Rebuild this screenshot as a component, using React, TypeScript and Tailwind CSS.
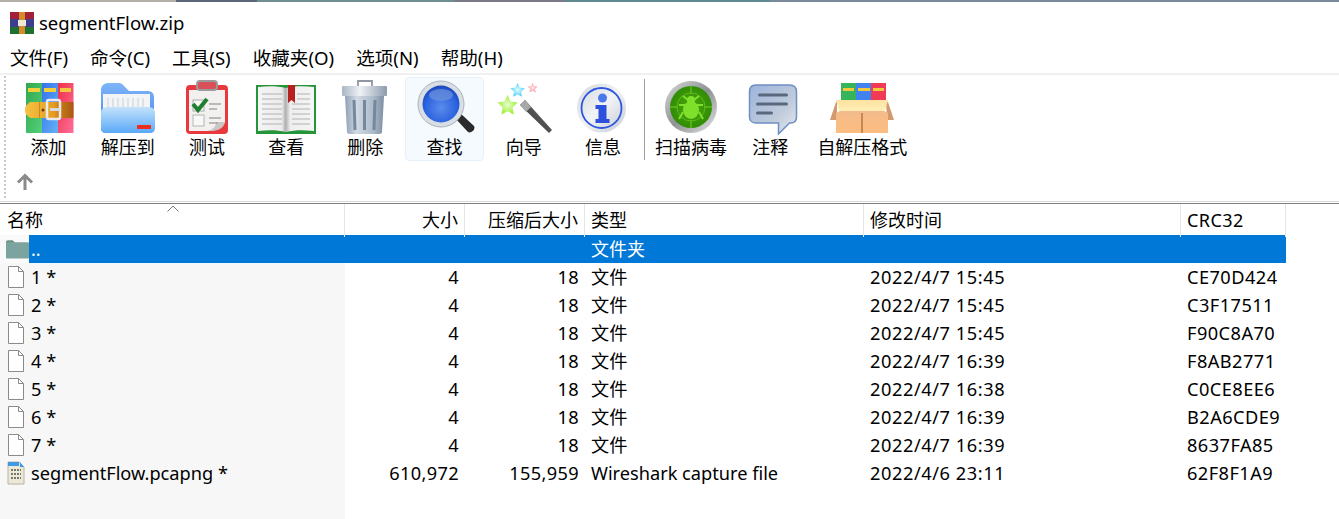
import type { ReactNode } from 'react';

const cjk = "font-['Noto_Sans','Noto_Sans_CJK_SC',sans-serif]";

function RarIcon() {
  return (
    <svg width="64" height="56" viewBox="0 0 64 56">
      <defs>
        <linearGradient id="rg" x1="0" x2="1" y1="0" y2="1"><stop offset="0" stopColor="#2fa84f" /><stop offset="1" stopColor="#55cf7a" /></linearGradient>
        <linearGradient id="rb" x1="0" x2="1" y1="0" y2="1"><stop offset="0" stopColor="#3572ea" /><stop offset="1" stopColor="#63b2f7" /></linearGradient>
        <linearGradient id="rr" x1="0" x2="1" y1="0" y2="1"><stop offset="0" stopColor="#ee3048" /><stop offset="1" stopColor="#fd6f98" /></linearGradient>
        <linearGradient id="rs" x1="0" x2="1"><stop offset="0" stopColor="#f6c243" /><stop offset="0.6" stopColor="#e49c22" /><stop offset="0.72" stopColor="#c97a18" /><stop offset="1" stopColor="#a85a12" /></linearGradient>
      </defs>
      <rect x="9" y="3" width="16" height="50" fill="url(#rg)" />
      <rect x="25" y="3" width="16" height="50" fill="url(#rb)" />
      <rect x="41" y="3" width="15.500" height="50" fill="url(#rr)" />
      <rect x="11" y="8" width="12" height="4" fill="#f2cf3c" />
      <rect x="27" y="8" width="12" height="4" fill="#f2cf3c" />
      <rect x="43" y="8" width="11" height="4" fill="#f2c83c" />
      <path d="M13 22h43.500v16H13c-3-3-5-3.500-5-8s2-5 5-8z" fill="url(#rs)" />
      <path d="M22 22h1v16h-1z" fill="#c98a22" />
      <circle cx="26" cy="30" r="1.500" fill="#6b3c0c" />
      <rect x="30" y="20" width="13" height="19" rx="2" fill="none" stroke="#e9e9ee" strokeWidth="2.500" />
      <rect x="33" y="28" width="10" height="3" fill="#d8dae0" />
    </svg>
  );
}

function FolderIcon() {
  return (
    <svg width="64" height="56" viewBox="0 0 64 56">
      <defs>
        <linearGradient id="fb" x1="0" x2="0" y1="0" y2="1"><stop offset="0" stopColor="#c3e2fb" /><stop offset="1" stopColor="#5ba9f8" /></linearGradient>
        <linearGradient id="ft" x1="0" x2="0" y1="0" y2="1"><stop offset="0" stopColor="#7fb6f8" /><stop offset="1" stopColor="#3f7cf0" /></linearGradient>
      </defs>
      <path d="M5 10c0-4 3-7 7-7h11c3 0 4 2 6 4l4 4h19c4 0 6 3 6 6v31c0 3-2 5-5 5H10c-3 0-5-2-5-5z" fill="url(#ft)" />
      <rect x="7" y="14" width="47" height="20" fill="#f2f4f6" />
      <path d="M12 18v9M17 18v9M22 18v9M27 18v9M32 18v9M37 18v9M42 18v9M47 18v9" stroke="#c8d0d8" strokeWidth="1" />
      <path d="M5 33c0-4 2-5 6-6h41c4 0 7 2 7 6v15c0 3-2 5-5 5H10c-3 0-5-2-5-5z" fill="url(#fb)" />
      <rect x="41" y="45" width="14" height="4" fill="#ee2f1c" />
    </svg>
  );
}

function TestIcon() {
  return (
    <svg width="64" height="56" viewBox="0 0 64 56">
      <rect x="11" y="5" width="42" height="49" rx="4" fill="#e8393f" />
      <path d="M14 10h36v32c-3 7-10 9-18 9H14z" fill="#f3f1ef" />
      <path d="M50 42c-2 8-8 9-18 9 8-2 9-6 9-9z" fill="#c9c6c3" />
      <rect x="22" y="1" width="20" height="9" rx="3" fill="#d85058" stroke="#9b9b9b" strokeWidth="2" />
      <rect x="18" y="20" width="11" height="11" fill="#f8f8f8" stroke="#a9a9a9" />
      <rect x="18" y="35" width="11" height="11" fill="#f8f8f8" stroke="#b5b5b5" />
      <path d="M18 24l5 6 9-11" fill="none" stroke="#1f7f2f" strokeWidth="4" />
      <path d="M34 24h12M34 29h8M34 38h12M34 43h9" stroke="#aaa6a3" strokeWidth="1.500" />
    </svg>
  );
}

function BookIcon() {
  return (
    <svg width="64" height="56" viewBox="0 0 64 56">
      <defs>
        <linearGradient id="bl" x1="0" x2="1"><stop offset="0" stopColor="#f5f5f5" /><stop offset="0.85" stopColor="#ececec" /><stop offset="1" stopColor="#a9a9a9" /></linearGradient>
        <linearGradient id="br" x1="0" x2="1"><stop offset="0" stopColor="#b5b5b5" /><stop offset="0.15" stopColor="#eeeeee" /><stop offset="1" stopColor="#f5f5f5" /></linearGradient>
      </defs>
      <path d="M2 5h60v49H2z" fill="#25953a" />
      <path d="M4 7c10-1 20-1 28 1v44c-8-2-18-2-28-1z" fill="url(#bl)" />
      <path d="M60 7c-10-1-20-1-28 1v44c8-2 18-2 28-1z" fill="url(#br)" />
      <path d="M8 14h20M8 19h20M8 24h20M8 29h20M8 34h20M8 39h20M8 44h20M38 24h18M38 29h18M38 34h18M38 39h18M38 44h18M43 14h13M43 19h13" stroke="#c6c6c6" strokeWidth="1.300" />
      <path d="M34 5h7v18l-3.500-3-3.500 3z" fill="#b8201f" />
    </svg>
  );
}

function TrashIcon() {
  return (
    <svg width="64" height="56" viewBox="0 0 64 56">
      <defs>
        <linearGradient id="tb" x1="0" x2="1"><stop offset="0" stopColor="#8ea1b6" /><stop offset="0.3" stopColor="#d0dae4" /><stop offset="0.7" stopColor="#aebccb" /><stop offset="1" stopColor="#7e90a5" /></linearGradient>
        <linearGradient id="tl" x1="0" x2="1"><stop offset="0" stopColor="#a9b6c4" /><stop offset="0.4" stopColor="#eef2f5" /><stop offset="1" stopColor="#8d9caf" /></linearGradient>
      </defs>
      <path d="M25 7V1h14v6" fill="none" stroke="#8f98a3" strokeWidth="1.800" />
      <rect x="9" y="6" width="45" height="10" rx="1" fill="url(#tl)" />
      <path d="M12 16h39l-2 36c0 1-1 2-3 2H17c-2 0-3-1-3-2z" fill="url(#tb)" />
      <path d="M21 20l1 30M31.500 20v30M42 20l-1 30" stroke="#76889c" strokeWidth="3" />
    </svg>
  );
}

function SearchIcon() {
  return (
    <svg width="64" height="56" viewBox="0 0 64 56">
      <defs>
        <radialGradient id="sb" cx="0.5" cy="0.6" r="0.6"><stop offset="0" stopColor="#5b8bea" /><stop offset="0.7" stopColor="#2c63e0" /><stop offset="1" stopColor="#1b45b8" /></radialGradient>
      </defs>
      <path d="M41 37l5-5 15 14c2 3-3 8-6 6z" fill="#2b2b2b" />
      <circle cx="28" cy="24" r="23" fill="#d9dee4" stroke="#a9b2bc" strokeWidth="1" />
      <circle cx="28" cy="24" r="18.500" fill="url(#sb)" />
      <ellipse cx="28" cy="15" rx="12" ry="6" fill="#6e93dc" opacity="0.7" />
    </svg>
  );
}

function WandIcon() {
  return (
    <svg width="64" height="56" viewBox="0 0 64 56">
      <defs>
        <radialGradient id="wg"><stop offset="0" stopColor="#e8ffd0" /><stop offset="1" stopColor="#9cee30" /></radialGradient>
        <radialGradient id="wb"><stop offset="0" stopColor="#e4fdff" /><stop offset="1" stopColor="#4ed2f8" /></radialGradient>
        <radialGradient id="wp"><stop offset="0" stopColor="#ffe9ea" /><stop offset="1" stopColor="#f99ca6" /></radialGradient>
        <linearGradient id="wm" x1="0" x2="1" y1="1" y2="0"><stop offset="0" stopColor="#2a2a2a" /><stop offset="1" stopColor="#777777" /></linearGradient>
      </defs>
      <path d="M28 25l5-5 27 30-3 3z" fill="url(#wm)" />
      <path d="M28 25l5-5 6 7-5 5z" fill="#a8a8a8" />
      <path d="M15.600 15l3 6.500 7 1-5 5 1.200 7-6.200-3.300-6.200 3.300 1.200-7-5-5 7-1z" fill="url(#wg)" />
      <path d="M25.600 3l2.200 4.500 5 .7-3.600 3.500.8 5-4.400-2.300-4.400 2.300.8-5-3.600-3.500 5-.7z" fill="url(#wb)" />
      <path d="M40.600 3l1.500 3 3.500.5-2.500 2.500.6 3.500-3.100-1.700-3.100 1.700.6-3.500-2.500-2.500 3.500-.5z" fill="url(#wp)" />
    </svg>
  );
}

function InfoIcon() {
  return (
    <svg width="64" height="56" viewBox="1.500 0 64 56">
      <defs>
        <linearGradient id="ig" x1="0" x2="1" y1="0" y2="1"><stop offset="0" stopColor="#d3d8de" /><stop offset="0.5" stopColor="#f1f3f5" /><stop offset="1" stopColor="#c3cad2" /></linearGradient>
      </defs>
      <circle cx="32" cy="28" r="24.500" fill="url(#ig)" />
      <circle cx="32" cy="28" r="20" fill="none" stroke="#3157e0" strokeWidth="1.800" />
      <circle cx="33" cy="18" r="4.500" fill="#4a78ec" />
      <path d="M26 25h11v14h3v4H26v-4h3V29h-3z" fill="#2c50dc" />
    </svg>
  );
}

function BugIcon() {
  return (
    <svg width="64" height="56" viewBox="0 0 64 56">
      <defs>
        <radialGradient id="bg1" cx="0.5" cy="0.5" r="0.55"><stop offset="0" stopColor="#4ca70e" /><stop offset="1" stopColor="#2d8a04" /></radialGradient>
        <linearGradient id="bg2" x1="0" x2="1" y1="0" y2="1"><stop offset="0" stopColor="#d8dadb" /><stop offset="0.5" stopColor="#8f9294" /><stop offset="1" stopColor="#e4e5e6" /></linearGradient>
      </defs>
      <circle cx="32" cy="27" r="26" fill="url(#bg2)" />
      <circle cx="32" cy="27" r="21" fill="url(#bg1)" />
      <circle cx="32" cy="27" r="14" fill="none" stroke="#5dbb1c" strokeWidth="1" />
      <path d="M32 6v8M32 40v8M11 27h8M45 27h8" stroke="#5dbb1c" strokeWidth="1.500" />
      <circle cx="32" cy="20" r="4" fill="#7fe02a" />
      <ellipse cx="32" cy="30" rx="8" ry="9" fill="#7fe02a" />
      <path d="M24 16l5 4M40 16l-5 4M20 25h6l1 3M44 25h-6l-1 3M20 39l4-7M44 39l-4-7" fill="none" stroke="#7fe02a" strokeWidth="2" />
    </svg>
  );
}

function NoteIcon() {
  return (
    <svg width="64" height="56" viewBox="-2.500 0 64 56">
      <defs>
        <linearGradient id="ng" x1="0" x2="1" y1="0" y2="1"><stop offset="0" stopColor="#9db4dc" /><stop offset="0.6" stopColor="#bfcbdb" /><stop offset="1" stopColor="#e4e9ef" /></linearGradient>
      </defs>
      <path d="M15 5h34c5 0 7 3 7 7v25c0 4-2 6-6 6h-1L38 54V43H15c-4 0-6-3-6-6V12c0-4 2-7 6-7z" fill="url(#ng)" stroke="#6f8fc4" strokeWidth="1.500" />
      <path d="M19 15h27M17 24h29M17 33h14" stroke="#59687c" strokeWidth="3" strokeLinecap="round" />
    </svg>
  );
}

function BoxIcon() {
  return (
    <svg width="64" height="56" viewBox="0 0 64 56">
      <defs>
        <linearGradient id="xf" x1="0" x2="0" y1="0" y2="1"><stop offset="0" stopColor="#fde2a0" /><stop offset="1" stopColor="#fff3bc" /></linearGradient>
        <linearGradient id="xb" x1="0" x2="0" y1="0" y2="1"><stop offset="0" stopColor="#f3bb8b" /><stop offset="1" stopColor="#fdbd80" /></linearGradient>
      </defs>
      <rect x="11" y="3" width="16" height="22" fill="#35b45c" />
      <rect x="26" y="3" width="16" height="22" fill="#4083f0" />
      <rect x="41" y="3" width="15" height="22" fill="#f13a56" />
      <path d="M13 8h11v3H13zM28 8h12v3H28zM43 8h11v3H43z" fill="#f2c83c" />
      <path d="M7 22h-1L0 40h7zM56 22h2l6 18h-7z" fill="#d39a70" />
      <path d="M6 20h52l-4 14H10z" fill="url(#xf)" />
      <path d="M6 33l4-2h44l4 2v20H6z" fill="url(#xb)" />
      <path d="M31 33h2v20h-2z" fill="#c98757" />
    </svg>
  );
}

function FileIcon() {
  return (
    <svg width="18" height="24" viewBox="0 0 18 24">
      <path d="M1.500 1.500h10l5 5v16h-15z" fill="#fff" stroke="#8a8a8a" strokeWidth="1" />
      <path d="M11.500 1.500v5h5" fill="none" stroke="#8a8a8a" strokeWidth="1" />
    </svg>
  );
}

function CaptureIcon() {
  return (
    <svg width="18" height="24" viewBox="0 0 18 24">
      <path d="M1 1h11l5 5v17H1z" fill="#ece9d8" stroke="#b5b5a5" strokeWidth="1" />
      <path d="M1 1h11v4H1zM13 1l4 5h-4z" fill="#3f9ae5" />
      <path d="M4 9h10M4 13h10M4 17h10" stroke="#77776a" strokeWidth="2" strokeDasharray="2 1" />
    </svg>
  );
}

function FolderSmall() {
  return (
    <svg width="24" height="20" viewBox="0 0 24 20">
      <path d="M0 3c0-1 .5-2 2-2h5l2 2h14c.5 0 1 .5 1 1v15c0 .5-.5 1-1 1H1c-.5 0-1-.5-1-1z" fill="#7ba49e" />
      <path d="M0 3c0-1 .5-2 2-2h5l2 2z" fill="#6b9480" />
    </svg>
  );
}

function ToolButton({ icon, label, wide, active }: { icon: ReactNode; label: string; wide?: string; active?: boolean }) {
  return (
    <div
      className={`flex h-[84px] flex-col items-center rounded-sm border ${wide ?? 'w-[79.2px]'} ${
        active ? 'border-[#e6f0fa] bg-[#f5faff]' : 'border-transparent'
      }`}
    >
      <div className="mt-[2px] h-[55px] shrink-0">{icon}</div>
      <span className="whitespace-nowrap text-[18px] leading-[24px]">{label}</span>
    </div>
  );
}

const columns = 'grid grid-cols-[345px_120px_120px_279px_317px_105px] w-[1286px]';

const files = [
  { name: '1 *', time: '2022/4/7 15:45', crc: 'CE70D424' },
  { name: '2 *', time: '2022/4/7 15:45', crc: 'C3F17511' },
  { name: '3 *', time: '2022/4/7 15:45', crc: 'F90C8A70' },
  { name: '4 *', time: '2022/4/7 16:39', crc: 'F8AB2771' },
  { name: '5 *', time: '2022/4/7 16:38', crc: 'C0CE8EE6' },
  { name: '6 *', time: '2022/4/7 16:39', crc: 'B2A6CDE9' },
  { name: '7 *', time: '2022/4/7 16:39', crc: '8637FA85' },
];

function Row({ icon, name, size, packed, type, time, crc }: { icon: ReactNode; name: string; size: string; packed: string; type: string; time: string; crc: string }) {
  return (
    <div className={`${columns} h-[28px] text-[18.200px] leading-[28px]`}>
      <div className="flex items-center bg-[#f7f7f7]">
        <div className="flex w-[31px] shrink-0 justify-center pl-[1px]">{icon}</div>
        <span className="whitespace-nowrap">{name}</span>
      </div>
      <div className="pr-[6px] text-right tracking-[0.34px]">{size}</div>
      <div className="pr-[6px] text-right tracking-[0.34px]">{packed}</div>
      <div className="pl-[6px] whitespace-nowrap">{type}</div>
      <div className="pl-[6px] tracking-[0.57px]">{time}</div>
      <div className="pl-[6px] tracking-[0.45px]">{crc}</div>
    </div>
  );
}

export default function App() {
  return (
    <div className={`flex h-[519px] w-[1339px] flex-col overflow-hidden bg-white text-black ${cjk}`}>
      <div className="flex h-[2px] shrink-0">
        <div className="w-[176px] bg-[#b3aea6]" />
        <div className="w-[81px] bg-[#5b6678]" />
        <div className="w-[197px] bg-[#6f8e92]" />
        <div className="w-[111px] bg-[#7c7a88]" />
        <div className="w-[205px] bg-[#5f8a90]" />
        <div className="flex-1 bg-[#7a8a98]" />
      </div>

      <div className="flex h-[41px] shrink-0 items-center pl-[10px]">
        <svg width="24" height="22" viewBox="0 0 24 22">
          <rect y="0" width="24" height="7" fill="#a3203a" />
          <rect y="7" width="24" height="8" fill="#3e3e90" />
          <rect y="15" width="24" height="7" fill="#1e7030" />
          <rect x="9" width="6" height="22" fill="#d68a2a" />
          <rect x="8" y="8" width="8" height="6" fill="#efe7d6" />
        </svg>
        <span className="ml-[5px] text-[18.500px] leading-[24px]">segmentFlow.zip</span>
      </div>

      <div className="flex h-[30px] shrink-0 items-center gap-[22px] pl-[10px] text-[18.600px]">
        <span>文件(F)</span>
        <span>命令(C)</span>
        <span>工具(S)</span>
        <span>收藏夹(O)</span>
        <span>选项(N)</span>
        <span>帮助(H)</span>
      </div>

      <div className="h-[2px] shrink-0 bg-[#f0f0f0]" />

      <div className="relative flex h-[126px] shrink-0 flex-col">
        <div className="absolute left-[4px] top-[1px] h-[122px] border-l-2 border-dotted border-[#c8c8c8]" />
        <div className="flex items-start pl-[9px] pt-[2px]">
          <ToolButton icon={<RarIcon />} label="添加" />
          <ToolButton icon={<FolderIcon />} label="解压到" />
          <ToolButton icon={<TestIcon />} label="测试" />
          <ToolButton icon={<BookIcon />} label="查看" />
          <ToolButton icon={<TrashIcon />} label="删除" />
          <ToolButton icon={<SearchIcon />} label="查找" active />
          <ToolButton icon={<WandIcon />} label="向导" />
          <ToolButton icon={<InfoIcon />} label="信息" />
          <div className="ml-[1px] mr-[7px] mt-[2px] h-[81px] w-px bg-[#a0a0a0]" />
          <ToolButton icon={<BugIcon />} label="扫描病毒" />
          <ToolButton icon={<NoteIcon />} label="注释" />
          <ToolButton icon={<BoxIcon />} label="自解压格式" wide="w-[105px]" />
        </div>
        <svg className="ml-[16px] mt-[12px]" width="18" height="18" viewBox="0 0 18 18" fill="none" stroke="#8a8a8a" strokeWidth="3">
          <path d="M9 17V3M2 9.500l7-7 7 7" />
        </svg>
      </div>

      <div className="h-[1px] shrink-0 bg-[#d8d8d8]" />
      <div className="h-[1px] shrink-0 bg-white" />
      <div className="h-[1px] shrink-0 bg-[#808080]" />

      <div className={`${columns} relative h-[31px] shrink-0 text-[18px] leading-[33px]`}>
        <svg className="absolute left-[167px] top-[1px]" width="12" height="7" viewBox="0 0 12 7" fill="none" stroke="#7a7a7a">
          <path d="M.5 6.500L6 1l5.500 5.500" />
        </svg>
        <div className="border-r border-[#e5e5e5] pl-[7px]">名称</div>
        <div className="border-r border-[#e5e5e5] pr-[6px] text-right">大小</div>
        <div className="border-r border-[#e5e5e5] pr-[6px] text-right">压缩后大小</div>
        <div className="border-r border-[#e5e5e5] pl-[6px]">类型</div>
        <div className="border-r border-[#e5e5e5] pl-[6px]">修改时间</div>
        <div className="border-r border-[#e5e5e5] pl-[6px] tracking-[0.45px]">CRC32</div>
      </div>

      <div className="flex h-[28px] w-[1286px] shrink-0">
        <div className="flex w-[29px] shrink-0 items-center bg-[#fafafa] pl-[6px]">
          <FolderSmall />
        </div>
        <div className="grid flex-1 grid-cols-[316px_120px_120px_279px_317px_105px] bg-[#0078d7] text-[18px] leading-[28px] text-white">
          <div className="pl-[2px]">..</div>
          <div />
          <div />
          <div className="pl-[6px]">文件夹</div>
        </div>
      </div>

      <div className="flex flex-1 flex-col">
        {files.map((f) => (
          <Row key={f.name} icon={<FileIcon />} name={f.name} size="4" packed="18" type="文件" time={f.time} crc={f.crc} />
        ))}
        <Row icon={<CaptureIcon />} name="segmentFlow.pcapng *" size="610,972" packed="155,959" type="Wireshark capture file" time="2022/4/6 23:11" crc="62F8F1A9" />
        <div className="w-[345px] flex-1 bg-[#f7f7f7]" />
      </div>
    </div>
  );
}
